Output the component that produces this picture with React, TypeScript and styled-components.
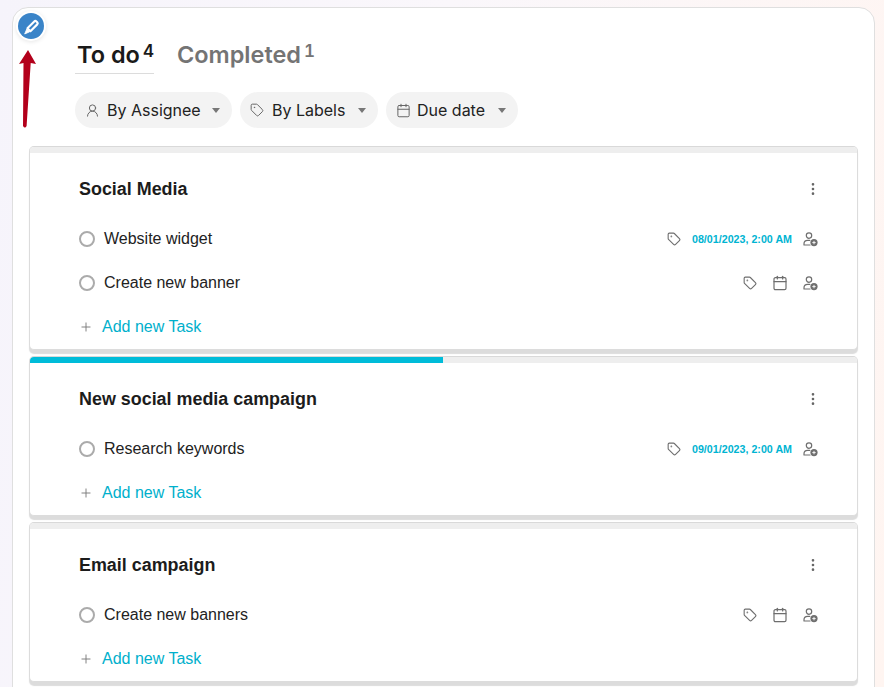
import React from "react";
import styled, { createGlobalStyle } from "styled-components";
import { Tag, Calendar, UserRound, Plus, MoreVertical } from "lucide-react";

const Global = createGlobalStyle`
  html, body { margin: 0; padding: 0; height: 100%; overflow: hidden; }
  body {
    background: linear-gradient(100deg, #f6f4fb 0%, #faf7fb 45%, #fff5f1 100%);
    font-family: "Liberation Sans", Arial, sans-serif;
  }
`;

const Page = styled.div`
  height: 687px;
  overflow: hidden;
  padding: 7px 9px 0 12px;
  box-sizing: border-box;
`;

const Panel = styled.main`
  position: relative;
  box-sizing: border-box;
  background: #fff;
  border: 1px solid #dfdfdf;
  border-radius: 16px;
  padding: 0 16px 40px 16px;
  min-height: 720px;
`;

const EditBadge = styled.div`
  position: absolute;
  left: 5px;
  top: 5px;
  width: 26px;
  height: 26px;
  border-radius: 50%;
  background: #3a84c8;
  color: #fff;
  display: flex;
  align-items: center;
  justify-content: center;
  box-shadow: 0 0 0 2px #fff, 0 1px 4px 2px rgba(0, 0, 0, 0.1);
`;

const ArrowMark = styled.svg`
  position: absolute;
  left: 4px;
  top: 42px;
`;

const Tabs = styled.nav`
  display: flex;
  align-items: flex-start;
  gap: 21px;
  margin-left: 46px;
  padding-top: 32px;
`;

const TabItem = styled.div<{ $active?: boolean }>`
  display: flex;
  align-items: flex-start;
  height: 34px;
  padding: 0 0 0 2px;
  box-sizing: border-box;
  border-bottom: 1px solid ${(p) => (p.$active ? "#dcdcdc" : "transparent")};
  color: ${(p) => (p.$active ? "#1a1a1a" : "#747474")};
  font-family: Inter, sans-serif;
  font-weight: 600;
  font-size: 23.5px;
  line-height: 30px;
`;

const TabCount = styled.sup`
  font-size: 17px;
  font-weight: 600;
  line-height: 16px;
  margin-left: 3px;
  margin-top: 3px;
  vertical-align: baseline;
  font-variant-numeric: tabular-nums;
`;

const Filters = styled.div`
  display: flex;
  gap: 8px;
  margin: 18px 0 18px 46px;
`;

const Chip = styled.button<{ $w: number }>`
  display: flex;
  align-items: center;
  width: ${(p) => p.$w}px;
  height: 36px;
  box-sizing: border-box;
  padding: 0 10px;
  border: 0;
  border-radius: 18px;
  background: #f3f3f3;
  color: #222;
  font-family: Inter, sans-serif;
  font-size: 16px;
  svg { color: #666; flex: none; }
`;

const ChipLabel = styled.span<{ $gap: number }>`
  margin-left: ${(p) => p.$gap}px;
  flex: 1;
  text-align: left;
`;

const Caret = styled.span`
  width: 0;
  height: 0;
  border-left: 4px solid transparent;
  border-right: 4px solid transparent;
  border-top: 5px solid #777;
  margin-right: 2px;
`;

const Card = styled.section`
  box-sizing: border-box;
  margin-bottom: 6px;
  background: #fff;
  border: 1px solid #dcdcdc;
  border-top: 1px solid #d9d9d9;
  border-radius: 5px;
  box-shadow: 0 4px 1px #dcdcdc;
  overflow: hidden;
`;

const Track = styled.div`
  height: 6px;
  background: #eeeeee;
`;

const Progress = styled.div`
  height: 100%;
  background: #00bcd9;
`;

const CardHead = styled.header`
  display: flex;
  align-items: center;
  justify-content: space-between;
  height: 36px;
  margin-top: 18px;
  padding: 0 36px 0 49px;
  margin-bottom: 10px;
  color: #666;
`;

const CardTitle = styled.h2`
  margin: 0;
  font-size: 17.92px;
  font-weight: 700;
  color: #1c1c1c;
`;

const Row = styled.div`
  display: flex;
  align-items: center;
  height: 44px;
  padding: 0 39px 0 49px;
`;

const Check = styled.span`
  width: 16px;
  height: 16px;
  box-sizing: border-box;
  border-radius: 50%;
  border: 2px solid #ababab;
  flex: none;
`;

const TaskName = styled.span`
  margin-left: 9px;
  font-size: 16px;
  color: #222;
  flex: 1;
`;

const Meta = styled.div`
  display: flex;
  align-items: center;
  gap: 15px;
  color: #6e6e6e;
`;

const DateText = styled.span`
  font-size: 10.7px;
  font-weight: 700;
  color: #00b4d2;
  margin: 0 -4px;
`;

const AddRow = styled.div`
  display: flex;
  align-items: center;
  height: 44px;
  padding-left: 49px;
  color: #7a7a7a;
`;

const AddLabel = styled.span`
  margin-left: 9px;
  font-size: 16px;
  color: #00b0cc;
`;

const Assign = () => (
  <svg width="15" height="15" viewBox="0 0 15 15" fill="none" stroke="currentColor" strokeWidth="1.2">
    <circle cx="6" cy="3.6" r="2.7" />
    <path d="M1 13v-1.2c0-2 1.6-3.4 3.6-3.4h2.2M1 13h6" strokeLinecap="round" />
    <circle cx="11" cy="10.6" r="3.6" fill="currentColor" stroke="none" />
    <path d="M11 8.9v3.4M9.3 10.6h3.4" stroke="#fff" strokeWidth="0.9" />
  </svg>
);

const Pencil = () => (
  <svg width="17" height="17" viewBox="0 0 16 16" fill="none" stroke="#fff" strokeWidth="2" strokeLinejoin="round">
    <path d="M4.2 9.6 L10.6 3.2 Q11.6 2.2 12.6 3.2 L13.4 4 Q14.4 5 13.4 6 L7 12.4 Z" />
    <path d="M3.6 10.4 L1.6 15 L6.2 13 Z" fill="#fff" strokeWidth="0.8" />
  </svg>
);

type Task = { name: string; date?: string };
type Project = { title: string; pct?: number; tasks: Task[] };

const projects: Project[] = [
  {
    title: "Social Media",
    tasks: [
      { name: "Website widget", date: "08/01/2023, 2:00 AM" },
      { name: "Create new banner" },
    ],
  },
  {
    title: "New social media campaign",
    pct: 49.9,
    tasks: [{ name: "Research keywords", date: "09/01/2023, 2:00 AM" }],
  },
  { title: "Email campaign", tasks: [{ name: "Create new banners" }] },
];

export default function App() {
  return (
    <Page>
      <Global />
      <Panel>
        <EditBadge>
          <Pencil />
        </EditBadge>
        <ArrowMark width="20" height="80" viewBox="0 0 20 80">
          <path d="M11 0 L19 14 L13.7 13 L9.6 76 Q8 79 6 76 L6.5 13 L2 14 Z" fill="#b3001b" />
        </ArrowMark>
        <Tabs>
          <TabItem $active>
            To do<TabCount>4</TabCount>
          </TabItem>
          <TabItem>
            Completed<TabCount>1</TabCount>
          </TabItem>
        </Tabs>
        <Filters>
          <Chip $w={157}>
            <UserRound size={15} strokeWidth={1.6} />
            <ChipLabel $gap={7}>By Assignee</ChipLabel>
            <Caret />
          </Chip>
          <Chip $w={138}>
            <Tag size={14} strokeWidth={1.7} />
            <ChipLabel $gap={8}>By Labels</ChipLabel>
            <Caret />
          </Chip>
          <Chip $w={132}>
            <Calendar size={15} strokeWidth={1.6} />
            <ChipLabel $gap={6}>Due date</ChipLabel>
            <Caret />
          </Chip>
        </Filters>
        {projects.map((p) => (
          <Card key={p.title}>
            <Track>{p.pct ? <Progress style={{ width: `${p.pct}%` }} /> : null}</Track>
            <CardHead>
              <CardTitle>{p.title}</CardTitle>
              <MoreVertical size={16} strokeWidth={2} />
            </CardHead>
            {p.tasks.map((t) => (
              <Row key={t.name}>
                <Check />
                <TaskName>{t.name}</TaskName>
                <Meta>
                  <Tag size={14} strokeWidth={1.9} />
                  {t.date ? <DateText>{t.date}</DateText> : <Calendar size={16} strokeWidth={1.8} />}
                  <Assign />
                </Meta>
              </Row>
            ))}
            <AddRow>
              <Plus size={14} strokeWidth={1.6} />
              <AddLabel>Add new Task</AddLabel>
            </AddRow>
          </Card>
        ))}
      </Panel>
    </Page>
  );
}
